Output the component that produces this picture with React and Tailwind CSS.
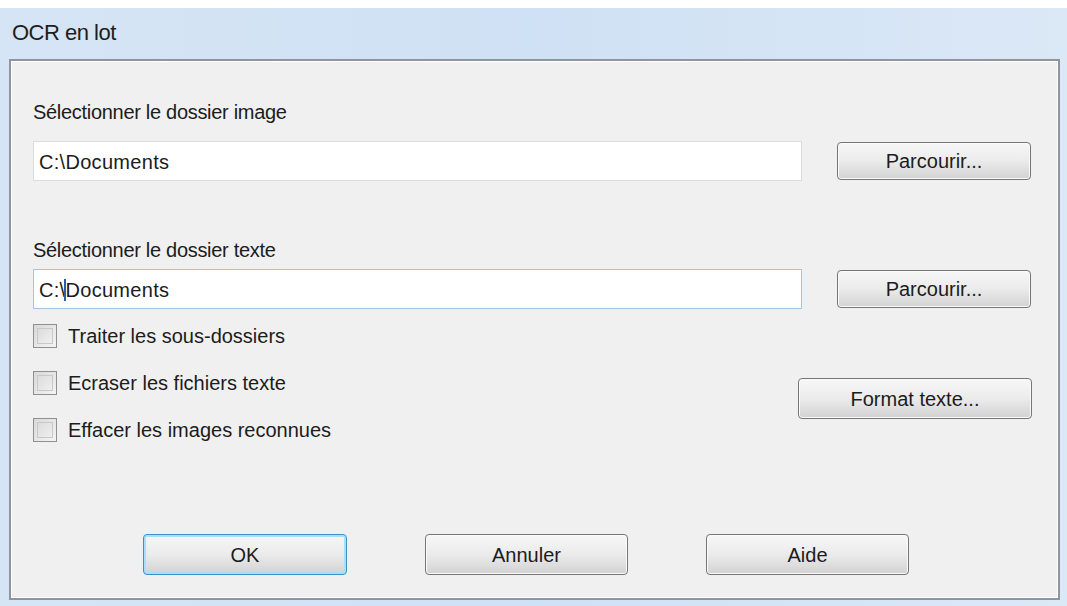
import React from "react";

function Button({ children, primary, className = "" }) {
  return (
    <div
      className={`flex items-center justify-center rounded-[4px] border text-[20px] text-[#1c1c1c] bg-gradient-to-b from-[#f7f7f7] via-[#ebebeb] to-[#d2d2d2] ${
        primary
          ? "border-[#3d8fc4] shadow-[inset_0_0_0_2px_#a6e1f7]"
          : "border-[#757575] shadow-[inset_0_0_0_1px_#fbfbfb]"
      } ${className}`}
    >
      {children}
    </div>
  );
}

function Check({ label }) {
  return (
    <div className="flex items-center h-[24px]">
      <div className="w-[24px] h-[24px] border border-[#8e8f8f] bg-gradient-to-br from-[#d9d9d9] to-[#f4f4f4] p-[3px]">
        <div className="w-full h-full border border-[#c8c8c8] bg-gradient-to-br from-[#dcdcdc] to-[#efefef]" />
      </div>
      <span className="ml-[11px] text-[20px] text-[#1c1c1c] leading-none">{label}</span>
    </div>
  );
}

export default function App() {
  return (
    <div
      className="w-[1067px] h-[606px] bg-white pt-[8px] overflow-hidden"
      style={{ fontFamily: '"Liberation Sans", Arial, sans-serif' }}
    >
      <div className="h-[598px] flex flex-col bg-gradient-to-r from-[#d6e5f5] via-[#cfe1f4] to-[#dbe8f6]">
        <div className="h-[51px] flex items-center pl-[12px] pb-[2px] text-[22px] text-[#1e1e1e] tracking-[-0.5px]">
          OCR en lot
        </div>
        <div className="ml-[9px] mr-[7px] h-[541px] border-2 border-[#8f959c] bg-[#f0f0f0] shadow-[inset_0_0_0_1px_#ffffff] flex flex-col pl-[22px] pr-[26px] pt-[39px] pb-[23px] text-[#1c1c1c]">
          <div className="text-[20px] leading-[24px] tracking-[-0.3px]">Sélectionner le dossier image</div>
          <div className="flex items-center mt-[17px]">
            <div className="w-[769px] h-[40px] border border-[#dcdcdc] bg-white flex items-center pl-[5px] pt-[2px] text-[20px] tracking-[0.3px]">
              C:\Documents
            </div>
            <Button className="ml-[35px] w-[194px] h-[38px]">Parcourir...</Button>
          </div>
          <div className="mt-[57px] text-[20px] leading-[24px] tracking-[-0.3px]">Sélectionner le dossier texte</div>
          <div className="flex items-center mt-[7px]">
            <div className="w-[769px] h-[40px] border border-[#a9c3db] bg-white flex items-center pl-[5px] pt-[2px] text-[20px] tracking-[0.3px]">
              C:\<span className="w-[2px] h-[22px] bg-[#2a5fa8] -mx-[1px]" />Documents
            </div>
            <Button className="ml-[35px] w-[194px] h-[38px]">Parcourir...</Button>
          </div>
          <div className="flex mt-[15px]">
            <div className="flex flex-col gap-[23px]">
              <Check label="Traiter les sous-dossiers" />
              <Check label="Ecraser les fichiers texte" />
              <Check label="Effacer les images reconnues" />
            </div>
            <Button className="ml-auto mt-[54px] w-[234px] h-[41px]">Format texte...</Button>
          </div>
          <div className="mt-auto flex pl-[110px] gap-[78px]">
            <Button primary className="w-[204px] h-[41px]">OK</Button>
            <Button className="w-[203px] h-[41px]">Annuler</Button>
            <Button className="w-[203px] h-[41px]">Aide</Button>
          </div>
        </div>
      </div>
    </div>
  );
}
